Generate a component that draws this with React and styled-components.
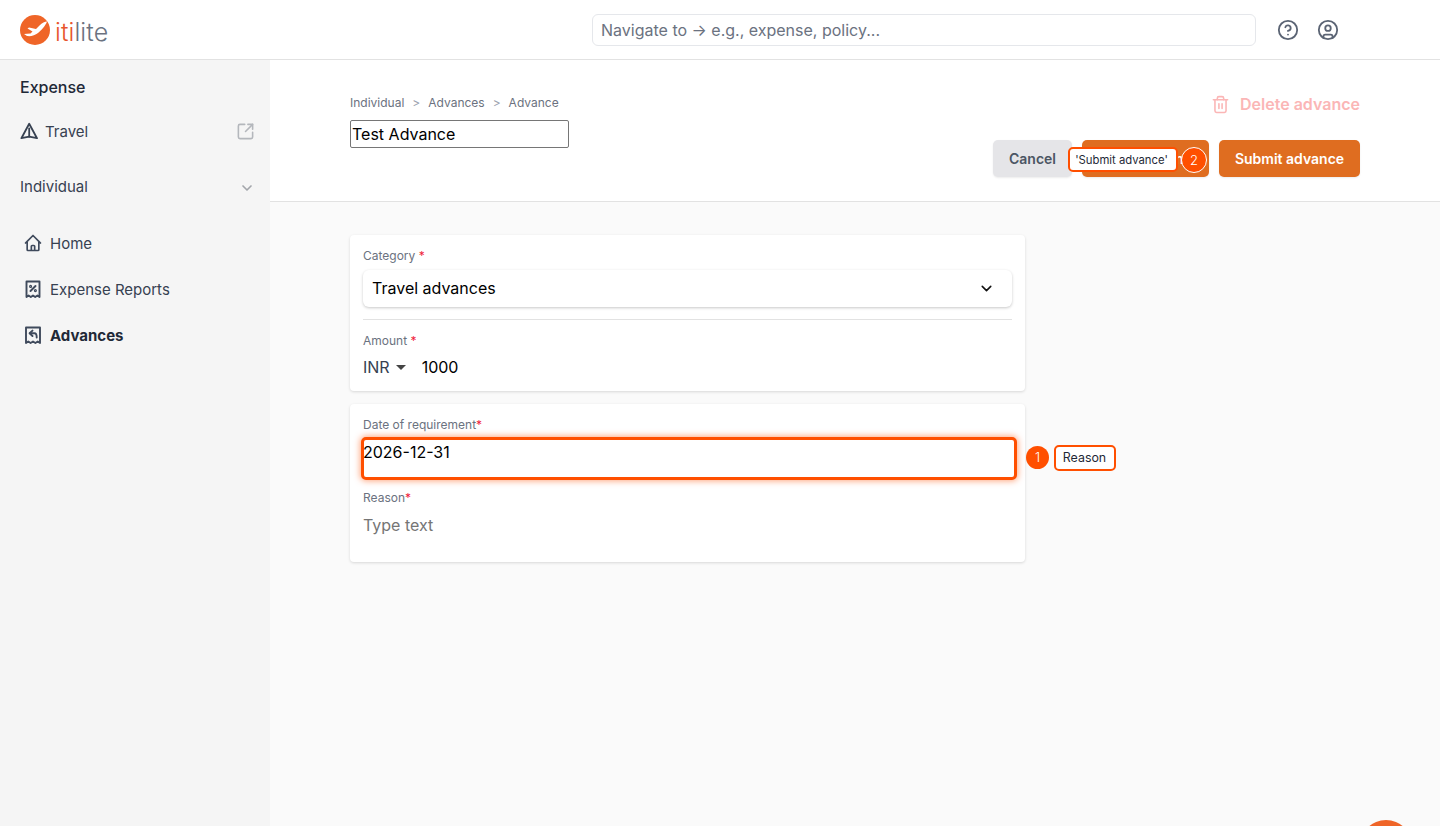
import React from 'react';
import styled, { createGlobalStyle } from 'styled-components';
import { ChevronDown, CircleHelp, CircleUser, SquareArrowOutUpRight, Trash2 } from 'lucide-react';
import { HiOutlineHome } from 'react-icons/hi';

const GlobalStyle = createGlobalStyle`
  * { box-sizing: border-box; }
  html, body { margin: 0; height: 100%; overflow: hidden; }
  body { font-family: Inter, "Liberation Sans", sans-serif; background: #fff; color: #111827; }
`;

const Page = styled.div`
  position: relative;
  height: 826px;
  display: flex;
  flex-direction: column;
  overflow: hidden;
`;

const TopBar = styled.header`
  height: 60px;
  flex: none;
  display: flex;
  align-items: center;
  padding: 1px 0 0 20px;
  background: #fff;
  border-bottom: 1px solid #e2e2e2;
`;

const Logo = styled.div`
  display: flex;
  align-items: center;
  gap: 5px;
  width: 572px;
  height: 100%;
`;

const LogoWord = styled.span`
  font-size: 25px;
  line-height: 30px;
  font-weight: 300;
  letter-spacing: 0.1px;
  color: #6b7280;
  margin-top: 3px;
  span { color: #e8552d; }
`;

const SearchBox = styled.div`
  width: 664px;
  height: 32px;
  display: flex;
  align-items: center;
  padding: 0 8px;
  font-size: 16px;
  color: #6b7280;
  border: 1px solid #e5e7eb;
  border-radius: 6px;
`;

const TopIcons = styled.div`
  display: flex;
  align-items: center;
  gap: 18px;
  margin-left: 21px;
  color: #5b6474;
`;

const Body = styled.div`
  flex: 1;
  display: flex;
  min-height: 0;
`;

const Sidebar = styled.aside`
  width: 270px;
  flex: none;
  background: #f5f5f5;
  padding: 17px 17px 0 20px;
`;

const SideTitle = styled.div`
  font-size: 16px;
  line-height: 20px;
  font-weight: 500;
  color: #1f2937;
`;

const TravelRow = styled.div`
  display: flex;
  align-items: center;
  gap: 7px;
  margin-top: 23px;
  height: 22px;
  font-size: 15px;
  color: #374151;
  svg:last-child { margin-left: auto; margin-right: -2px; color: #b4b7bc; }
`;

const GroupRow = styled.div`
  display: flex;
  align-items: center;
  justify-content: space-between;
  margin-top: 33px;
  height: 22px;
  font-size: 15px;
  color: #374151;
  svg { color: #a3a6ab; margin-top: 3px; margin-right: -2px; }
`;

const NavList = styled.nav`
  margin-top: 35px;
  display: flex;
  flex-direction: column;
  gap: 24px;
  padding-left: 3px;
`;

const NavItem = styled.div`
  display: flex;
  align-items: center;
  gap: 7px;
  height: 22px;
  font-size: 15px;
  font-weight: ${(p) => (p.$active ? 700 : 400)};
  color: ${(p) => (p.$active ? '#1f2937' : '#374151')};
  svg { flex: none; color: #3f4a5c; }
`;

const Main = styled.main`
  flex: 1;
  background: #fafafa;
  min-width: 0;
`;

const PageHead = styled.div`
  height: 142px;
  background: #fff;
  border-bottom: 1px solid #e2e2e2;
  padding: 34px 80px 0;
  display: flex;
  justify-content: space-between;
`;

const HeadLeft = styled.div`
  display: flex;
  flex-direction: column;
`;

const Crumbs = styled.div`
  display: flex;
  gap: 8px;
  font-size: 12px;
  line-height: 18px;
  color: #6b7280;
  i { font-style: normal; color: #9ca3af; }
`;

const TitleInput = styled.div`
  width: 219px;
  height: 28px;
  margin-top: 8px;
  padding: 0 1px;
  display: flex;
  align-items: center;
  font-size: 16px;
  color: #000;
  border: 1px solid #767676;
  border-radius: 2px;
`;

const HeadRight = styled.div`
  display: flex;
  flex-direction: column;
  align-items: flex-end;
`;

const DeleteLink = styled.div`
  display: flex;
  align-items: center;
  gap: 10px;
  height: 20px;
  font-size: 16px;
  font-weight: 600;
  color: #fbb6b6;
`;

const Actions = styled.div`
  position: relative;
  display: flex;
  gap: 10px;
  margin-top: 26px;
`;

const Button = styled.div`
  height: 37px;
  width: ${(p) => p.$width}px;
  display: flex;
  align-items: center;
  justify-content: center;
  font-size: 14px;
  font-weight: 600;
  border-radius: 5px;
  color: ${(p) => (p.$primary ? '#fff' : '#4b5563')};
  background: ${(p) => (p.$primary ? '#df6d20' : '#e5e5e8')};
  box-shadow: 0 1px 2px rgba(0, 0, 0, 0.08);
`;

const Form = styled.div`
  padding: 33px 80px 0;
  display: flex;
  flex-direction: column;
  gap: 13px;
  width: 835px;
`;

const Card = styled.section`
  background: #fff;
  border-radius: 4px;
  box-shadow: 0 1px 3px rgba(0, 0, 0, 0.14);
  padding: 13px 13px 0;
  height: ${(p) => p.$height}px;
`;

const Label = styled.div`
  font-size: 12px;
  line-height: 16px;
  color: #6b7280;
  b { font-weight: 400; color: #ef1c3c; }
`;

const Select = styled.div`
  height: 37px;
  margin-top: 6px;
  padding: 0 17px 1px 9px;
  display: flex;
  align-items: center;
  justify-content: space-between;
  font-size: 16px;
  color: #000;
  background: #fff;
  border-radius: 6px;
  box-shadow: 0 1px 3px rgba(0, 0, 0, 0.22);
`;

const Divider = styled.div`
  height: 1px;
  margin: 12px 0 13px;
  background: #e2e2e2;
`;

const AmountRow = styled.div`
  display: flex;
  align-items: center;
  margin-top: 6px;
  height: 24px;
  font-size: 16px;
  color: #000;
`;

const Currency = styled.span`
  color: #374151;
  margin-right: 6px;
`;

const Caret = styled.span`
  width: 0;
  height: 0;
  margin-right: 16px;
  border-left: 5px solid transparent;
  border-right: 5px solid transparent;
  border-top: 5px solid #444;
`;

const DateWrap = styled.div`
  position: relative;
  margin: 4px 0 0 -2px;
  width: 656px;
  height: 43px;
  padding: 1px 0 0;
  text-indent: -1px;
  font-size: 16px;
  line-height: 22px;
  color: #000;
  background: #fff;
  border: 3px solid #ff4f00;
  border-radius: 5px;
  box-shadow: 0 0 6px 1px rgba(255, 79, 0, 0.5);
`;

const ReasonLabel = styled(Label)`
  margin-top: 10px;
`;

const Placeholder = styled.div`
  margin-top: 7px;
  font-size: 16px;
  line-height: 24px;
  color: #757575;
`;

const Badge = styled.span`
  position: absolute;
  width: ${(p) => p.$size}px;
  height: ${(p) => p.$size}px;
  display: flex;
  align-items: center;
  justify-content: center;
  font-size: 13px;
  font-weight: 300;
  line-height: 1;
  text-indent: 0;
  color: #fff;
  background: #ff4f00;
  border: ${(p) => (p.$ring ? '1.5px solid #fff' : '0')};
  border-radius: 50%;
`;

const Tag = styled.span`
  position: absolute;
  height: 26px;
  display: flex;
  align-items: center;
  justify-content: center;
  font-size: ${(p) => p.$fontSize}px;
  font-weight: 400;
  text-indent: 0;
  color: #1f2937;
  background: #fff;
  border: 2px solid #ff4f00;
  border-radius: 5px;
  white-space: nowrap;
`;

const StepOneBadge = styled(Badge)`
  top: 6px;
  left: 662px;
`;

const StepOneTag = styled(Tag)`
  top: 5px;
  left: 690px;
  width: 62px;
  padding-right: 1px;
`;

const StepTwoTag = styled(Tag)`
  top: 7px;
  left: 75px;
  width: 110px;
  height: 25px;
  padding-right: 3px;
`;

const StepTwoBadge = styled(Badge)`
  top: 7px;
  left: 188px;
`;

const Fab = styled.div`
  position: absolute;
  left: 1360px;
  top: 820px;
  width: 52px;
  height: 52px;
  border-radius: 50%;
  background: #ef6528;
`;

const TravelIcon = () => (
  <svg width="18" height="18" viewBox="0 0 18 18" fill="none" stroke="currentColor" strokeWidth="1.8" strokeLinejoin="round" strokeLinecap="round">
    <path d="M9.2 1.8 L17 16.2 L9.2 14.6 L1.4 16.2 Z" />
    <path d="M9.2 6.5 V14.6" />
  </svg>
);

const ReceiptPercentIcon = () => (
  <svg width="20" height="20" viewBox="-1 -1 20 20" fill="none" stroke="currentColor" strokeWidth="1.9" strokeLinejoin="round" strokeLinecap="round">
    <path d="M2.5 1.5 H15.5 V17 L13.4 15.5 L11.2 17 L9 15.5 L6.8 17 L4.6 15.5 L2.5 17 Z" />
    <path d="M6.5 11 L11.5 6" />
    <circle cx="6.6" cy="6.4" r="0.6" />
    <circle cx="11.4" cy="10.6" r="0.6" />
  </svg>
);

const ReceiptReturnIcon = () => (
  <svg width="20" height="20" viewBox="-1 -1 20 20" fill="none" stroke="currentColor" strokeWidth="1.9" strokeLinejoin="round" strokeLinecap="round">
    <path d="M2 1.5 H16 V17 L13.7 15.5 L11.4 17 L9 15.5 L6.6 17 L4.3 15.5 L2 17 Z" />
    <path d="M8.5 4.6 L5.6 7.3 L8.5 10" />
    <path d="M6 7.3 H10.5 C12 7.3 12.7 8.6 12.7 11.5" />
  </svg>
);

const LogoMark = () => (
  <svg width="30" height="30" viewBox="0 0 30 30">
    <circle cx="15" cy="15" r="15" fill="#ef6528" />
    <path d="M27 6.5 C25 6.5 22 8 19.5 10.5 L16 14 L9 12.5 L7.5 13.5 L12.5 16.5 L10.5 18.5 L4 19 L7 21 C11 21.5 15 20.5 18 18 C21 15.5 25.5 11 27 6.5 Z" fill="#fff" />
  </svg>
);

const App = () => {
  return (
    <Page>
      <GlobalStyle />
      <TopBar>
        <Logo>
          <LogoMark />
          <LogoWord><span>iti</span>lite</LogoWord>
        </Logo>
        <SearchBox>Navigate to → e.g., expense, policy...</SearchBox>
        <TopIcons>
          <CircleHelp size={22} strokeWidth={2} />
          <CircleUser size={22} strokeWidth={2} />
        </TopIcons>
      </TopBar>
      <Body>
        <Sidebar>
          <SideTitle>Expense</SideTitle>
          <TravelRow>
            <TravelIcon />
            Travel
            <SquareArrowOutUpRight size={19} strokeWidth={2} />
          </TravelRow>
          <GroupRow>
            Individual
            <ChevronDown size={16} strokeWidth={2.5} />
          </GroupRow>
          <NavList>
            <NavItem><HiOutlineHome size={20} />Home</NavItem>
            <NavItem><ReceiptPercentIcon />Expense Reports</NavItem>
            <NavItem $active><ReceiptReturnIcon />Advances</NavItem>
          </NavList>
        </Sidebar>
        <Main>
          <PageHead>
            <HeadLeft>
              <Crumbs>
                <span>Individual</span><i>&gt;</i>
                <span>Advances</span><i>&gt;</i>
                <span>Advance</span>
              </Crumbs>
              <TitleInput>Test Advance</TitleInput>
            </HeadLeft>
            <HeadRight>
              <DeleteLink>
                <Trash2 size={19} strokeWidth={2} />
                Delete advance
              </DeleteLink>
              <Actions>
                <Button $width={79}>Cancel</Button>
                <Button $width={127} $primary>Submit advance</Button>
                <Button $width={141} $primary>Submit advance</Button>
                <StepTwoTag $fontSize={11.3}>'Submit advance'</StepTwoTag>
                <StepTwoBadge $size={26} $ring>2</StepTwoBadge>
              </Actions>
            </HeadRight>
          </PageHead>
          <Form>
            <Card $height={156}>
              <Label>Category <b>*</b></Label>
              <Select>
                Travel advances
                <ChevronDown size={17} strokeWidth={2.2} color="#111" />
              </Select>
              <Divider />
              <Label>Amount <b>*</b></Label>
              <AmountRow>
                <Currency>INR</Currency>
                <Caret />
                1000
              </AmountRow>
            </Card>
            <Card $height={158}>
              <Label>Date of requirement<b>*</b></Label>
              <DateWrap>
                2026-12-31
                <StepOneBadge $size={23}>1</StepOneBadge>
                <StepOneTag $fontSize={12.4}>Reason</StepOneTag>
              </DateWrap>
              <ReasonLabel>Reason<b>*</b></ReasonLabel>
              <Placeholder>Type text</Placeholder>
            </Card>
          </Form>
        </Main>
      </Body>
      <Fab />
    </Page>
  );
};

export default App;
